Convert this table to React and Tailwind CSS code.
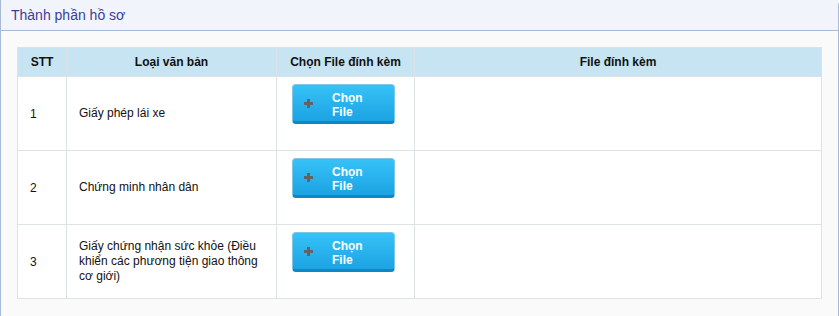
import React from "react";

const documents = [
  { id: 1, name: "Giấy phép lái xe" },
  { id: 2, name: "Chứng minh nhân dân" },
  {
    id: 3,
    name: "Giấy chứng nhận sức khỏe (Điều khiển các phương tiện giao thông cơ giới)",
  },
];

const PlusIcon = () => (
  <svg width="9" height="9" viewBox="0 0 9 9" className="shrink-0">
    <rect x="3" y="0" width="3" height="9" fill="#5f6468" />
    <rect x="0" y="3" width="9" height="3" fill="#5f6468" />
  </svg>
);

const UploadButton = () => (
  <button className="flex h-[40px] w-[103px] items-center rounded-[4px] border border-[#7fc6e6] border-b-[3px] border-b-[#0f87c4] bg-gradient-to-b from-[#36c2f7] to-[#1ba3e3] pl-[11px] text-left">
    <PlusIcon />
    <span className="ml-[19px] mt-[3px] w-[40px] text-[12px] font-bold leading-[14px] text-white">
      Chọn File
    </span>
  </button>
);

const App = () => {
  return (
    <div className="h-[316px] w-[839px] overflow-hidden bg-white font-['Liberation_Sans',Arial,sans-serif]">
      <div className="h-[340px] rounded-tr-[5px] border-x border-[#a9b9d8] bg-[#fafafa]">
        <div className="flex h-[31px] items-center border-b border-[#a9b9d8] bg-[#f1f5fb] pl-[10px]">
          <h2 className="text-[14px] text-[#3a3d9a]">Thành phần hồ sơ</h2>
        </div>

        <div className="px-4 pt-4">
          <table className="w-full table-fixed border-collapse bg-white text-[12px] text-[#111]">
            <colgroup>
              <col className="w-[49px]" />
              <col className="w-[210px]" />
              <col className="w-[138px]" />
              <col />
            </colgroup>
            <thead>
              <tr className="h-[29px] bg-[#c6e4f1]">
                <th className="border border-[#dbe3e6] font-bold">STT</th>
                <th className="border border-[#dbe3e6] font-bold">Loại văn bản</th>
                <th className="border border-[#dbe3e6] font-bold">Chọn File đính kèm</th>
                <th className="border border-[#dbe3e6] font-bold">File đính kèm</th>
              </tr>
            </thead>
            <tbody>
              {documents.map((doc) => (
                <tr key={doc.id} className="h-[74px]">
                  <td className="border border-[#dbe3e6] px-3 align-middle">{doc.id}</td>
                  <td className="border border-[#dbe3e6] px-3 align-middle leading-[15px]">
                    {doc.name}
                  </td>
                  <td className="border border-[#dbe3e6] pl-[15px] pt-[7px] align-top">
                    <div className="h-[66px]">
                      <UploadButton />
                    </div>
                  </td>
                  <td className="border border-[#dbe3e6]"></td>
                </tr>
              ))}
            </tbody>
          </table>
        </div>
      </div>
    </div>
  );
};

export default App;
